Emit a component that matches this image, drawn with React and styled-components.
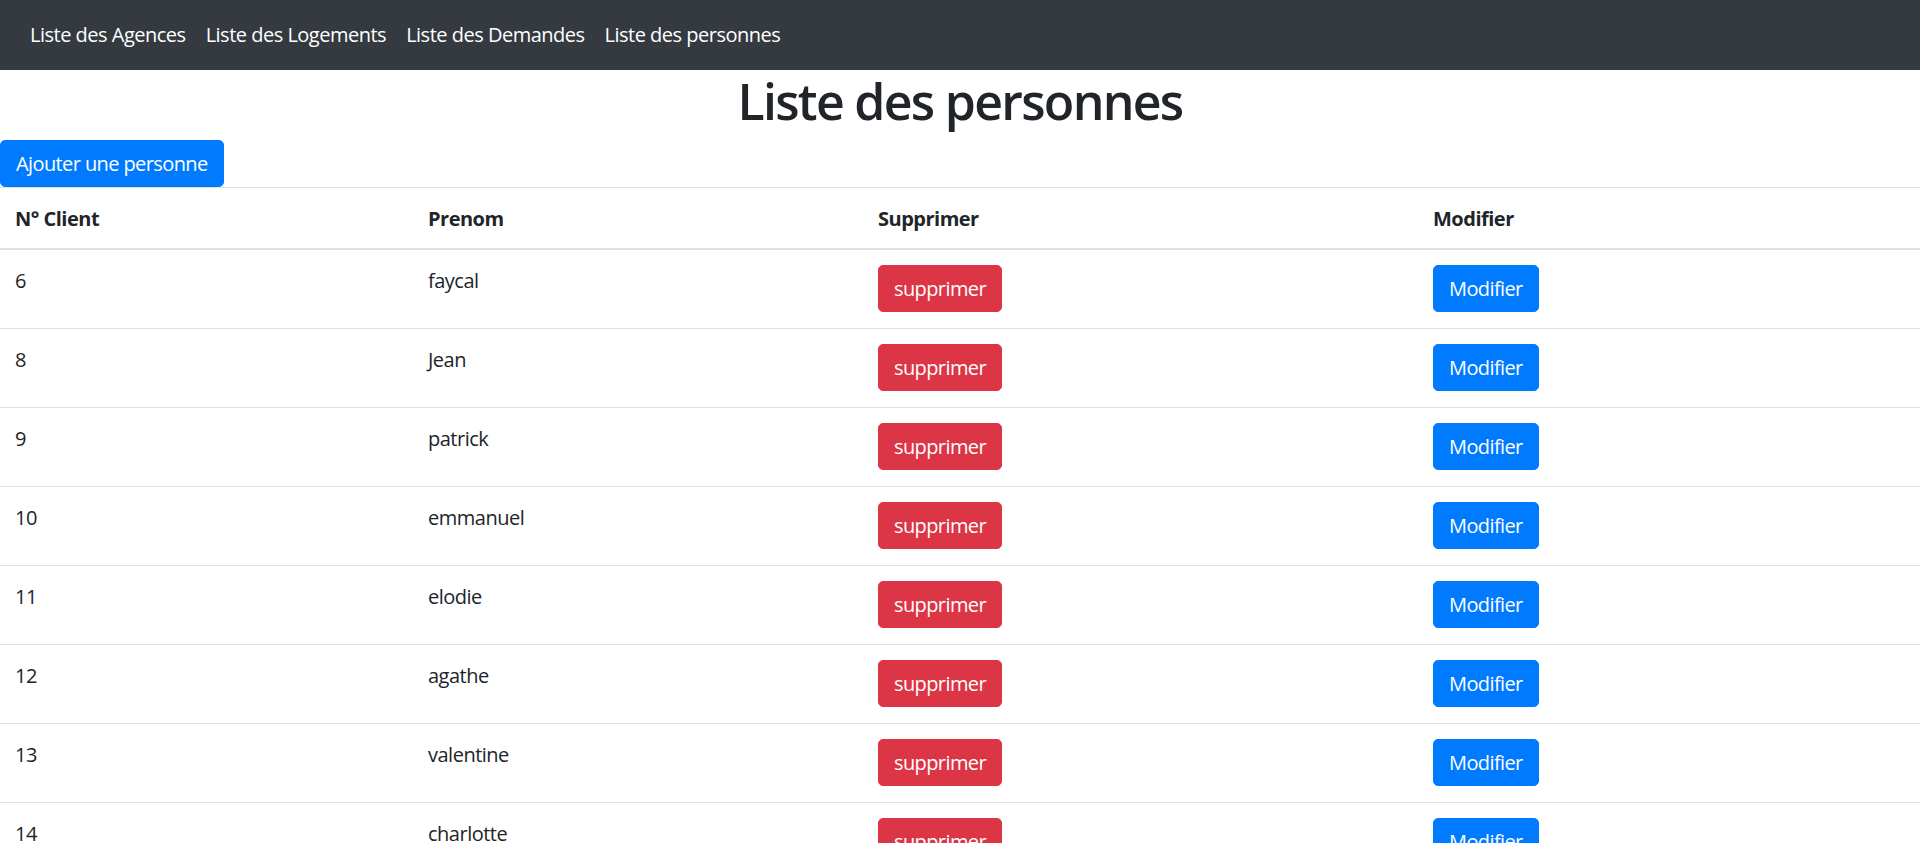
import React from "react";
import styled, { createGlobalStyle } from "styled-components";

const Global = createGlobalStyle`
  * { box-sizing: border-box; }
  body {
    margin: 0;
    font-family: "Open Sans", "Noto Sans", sans-serif;
    font-size: 20px;
    line-height: 30px;
    letter-spacing: -0.5px;
    color: #212529;
    background: #fff;
  }
`;

const NavBar = styled.nav`
  display: flex;
  align-items: center;
  height: 70px;
  padding: 10px 20px;
  background: #343a40;
`;

const NavLink = styled.a`
  padding: 10px 10px;
  color: #fff;
  text-decoration: none;
  font-size: 20px;
  line-height: 30px;
`;

const Title = styled.h1`
  margin: 0 0 7px;
  text-align: center;
  font-size: 50px;
  line-height: 63px;
  font-weight: 600;
  letter-spacing: -1.7px;
  color: #212529;
`;

const Btn = styled.button`
  display: inline-block;
  font-family: inherit;
  font-size: 20px;
  line-height: 30px;
  letter-spacing: -0.6px;
  padding: 7.5px 15px;
  border: 1px solid ${(p) => p.$bg};
  border-radius: 5px;
  background: ${(p) => p.$bg};
  color: #fff;
  cursor: pointer;
  vertical-align: top;
`;

const Table = styled.table`
  width: 100%;
  border-collapse: collapse;
  table-layout: fixed;
`;

const Th = styled.th`
  text-align: left;
  font-weight: 700;
  padding: 16px 15px 14px;
  line-height: 30px;
  border-top: 1px solid #dee2e6;
  border-bottom: 2px solid #dee2e6;
  width: ${(p) => p.$w || "auto"};
`;

const Td = styled.td`
  vertical-align: top;
  padding: 15px 15px 16px;
  line-height: 30px;
  border-top: 1px solid #dee2e6;
`;

const CellText = styled.span`
  display: inline-block;
  padding-top: 1px;
`;

const rows = [
  [6, "faycal"],
  [8, "Jean"],
  [9, "patrick"],
  [10, "emmanuel"],
  [11, "elodie"],
  [12, "agathe"],
  [13, "valentine"],
  [14, "charlotte"],
];

export default function App() {
  return (
    <>
      <Global />
      <NavBar>
        <NavLink href="#">Liste des Agences</NavLink>
        <NavLink href="#">Liste des Logements</NavLink>
        <NavLink href="#">Liste des Demandes</NavLink>
        <NavLink href="#">Liste des personnes</NavLink>
      </NavBar>
      <Title>Liste des personnes</Title>
      <Btn $bg="#007bff">Ajouter une personne</Btn>
      <Table>
        <thead>
          <tr>
            <Th $w="413px">N° Client</Th>
            <Th $w="450px">Prenom</Th>
            <Th $w="555px">Supprimer</Th>
            <Th>Modifier</Th>
          </tr>
        </thead>
        <tbody>
          {rows.map(([id, name]) => (
            <tr key={id}>
              <Td>
                <CellText>{id}</CellText>
              </Td>
              <Td>
                <CellText>{name}</CellText>
              </Td>
              <Td>
                <Btn $bg="#dc3545">supprimer</Btn>
              </Td>
              <Td>
                <Btn $bg="#007bff">Modifier</Btn>
              </Td>
            </tr>
          ))}
        </tbody>
      </Table>
    </>
  );
}
